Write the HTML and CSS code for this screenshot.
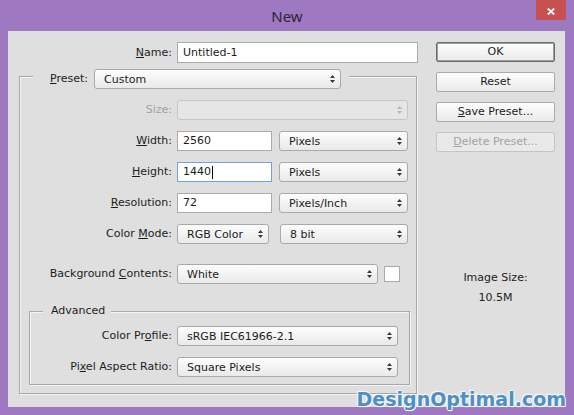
FILE: index.html
```html
<!DOCTYPE html>
<html>
<head>
<meta charset="utf-8">
<title>New</title>
<link rel="stylesheet" href="styles.css">
</head>
<body>
<div class="window">
  <div class="titlebar">
    <span></span>
    <div class="title">New</div>
    <div class="close"><svg width="8" height="7" viewBox="0 0 8 7"><path d="M0.8 0.5 L7.2 6.5 M7.2 0.5 L0.8 6.5" stroke="#fff" stroke-width="1.8" fill="none"/></svg></div>
  </div>
  <div class="content">
    <div class="left">
      <div class="frow name-row">
        <span class="lbl"><u>N</u>ame:</span>
        <div class="fields"><div class="input w241 h21">Untitled-1</div></div>
      </div>
      <div class="group outer">
        <div class="legend preset-legend">
          <span class="lbl"><u>P</u>reset:</span>
          <div class="combo w247"><span>Custom</span><svg class="arr" width="5" height="8" viewBox="0 0 5 8"><path d="M2.5 0 L5 3 L0 3 Z M0 5 L5 5 L2.5 8 Z" fill="#3a3a3a"/></svg></div>
        </div>
        <div class="rows top-rows">
          <div class="frow">
            <span class="lbl disabled">Size:</span>
            <div class="fields"><div class="combo w231 dis"><span></span><svg class="arr" width="5" height="8" viewBox="0 0 5 8"><path d="M2.5 0 L5 3 L0 3 Z M0 5 L5 5 L2.5 8 Z" fill="#b4b4b4"/></svg></div></div>
          </div>
          <div class="frow">
            <span class="lbl"><u>W</u>idth:</span>
            <div class="fields g7"><div class="input w95">2560</div><div class="combo w129"><span>Pixels</span><svg class="arr" width="5" height="8" viewBox="0 0 5 8"><path d="M2.5 0 L5 3 L0 3 Z M0 5 L5 5 L2.5 8 Z" fill="#3a3a3a"/></svg></div></div>
          </div>
          <div class="frow">
            <span class="lbl"><u>H</u>eight:</span>
            <div class="fields g7"><div class="input w95 focus">1440<span class="caret"></span></div><div class="combo w129"><span>Pixels</span><svg class="arr" width="5" height="8" viewBox="0 0 5 8"><path d="M2.5 0 L5 3 L0 3 Z M0 5 L5 5 L2.5 8 Z" fill="#3a3a3a"/></svg></div></div>
          </div>
          <div class="frow">
            <span class="lbl"><u>R</u>esolution:</span>
            <div class="fields g7"><div class="input w95">72</div><div class="combo w129"><span>Pixels/Inch</span><svg class="arr" width="5" height="8" viewBox="0 0 5 8"><path d="M2.5 0 L5 3 L0 3 Z M0 5 L5 5 L2.5 8 Z" fill="#3a3a3a"/></svg></div></div>
          </div>
          <div class="frow">
            <span class="lbl">Color <u>M</u>ode:</span>
            <div class="fields g11"><div class="combo w92"><span>RGB Color</span><svg class="arr" width="5" height="8" viewBox="0 0 5 8"><path d="M2.5 0 L5 3 L0 3 Z M0 5 L5 5 L2.5 8 Z" fill="#3a3a3a"/></svg></div><div class="combo w128"><span>8 bit</span><svg class="arr" width="5" height="8" viewBox="0 0 5 8"><path d="M2.5 0 L5 3 L0 3 Z M0 5 L5 5 L2.5 8 Z" fill="#3a3a3a"/></svg></div></div>
          </div>
        </div>
        <div class="frow bg-row">
          <span class="lbl">Background <u>C</u>ontents:</span>
          <div class="fields g6"><div class="combo w201"><span>White</span><svg class="arr" width="5" height="8" viewBox="0 0 5 8"><path d="M2.5 0 L5 3 L0 3 Z M0 5 L5 5 L2.5 8 Z" fill="#3a3a3a"/></svg></div><div class="swatch"></div></div>
        </div>
        <div class="group inner">
          <div class="legend adv-legend">Advanced</div>
          <div class="rows adv-rows">
            <div class="frow">
              <span class="lbl">Color Pr<u>o</u>file:</span>
              <div class="fields"><div class="combo w221"><span>sRGB IEC61966-2.1</span><svg class="arr" width="5" height="8" viewBox="0 0 5 8"><path d="M2.5 0 L5 3 L0 3 Z M0 5 L5 5 L2.5 8 Z" fill="#3a3a3a"/></svg></div></div>
            </div>
            <div class="frow">
              <span class="lbl">Pi<u>x</u>el Aspect Ratio:</span>
              <div class="fields"><div class="combo w221"><span>Square Pixels</span><svg class="arr" width="5" height="8" viewBox="0 0 5 8"><path d="M2.5 0 L5 3 L0 3 Z M0 5 L5 5 L2.5 8 Z" fill="#3a3a3a"/></svg></div></div>
            </div>
          </div>
        </div>
      </div>
    </div>
    <div class="right">
      <div class="btn default">OK</div>
      <div class="btn">Reset</div>
      <div class="btn"><u>S</u>ave Preset...</div>
      <div class="btn disabled-btn"><u>D</u>elete Preset...</div>
      <div class="imgsize">
        <div>Image Size:</div>
        <div>10.5M</div>
      </div>
    </div>
    <div class="watermark">DesignOptimal.com</div>
  </div>
</div>
</body>
</html>
```

FILE: styles.css
```css
* { box-sizing: border-box; }

body {
  margin: 0;
  width: 574px;
  height: 415px;
  overflow: hidden;
  background: #9e78c1;
  font-family: "DejaVu Sans", sans-serif;
  font-size: 11px;
  color: #1c1c1c;
}

u { text-decoration: underline; text-underline-offset: 1px; }

.titlebar {
  height: 31px;
  display: grid;
  grid-template-columns: 1fr auto 1fr;
}

.title {
  font-family: "Noto Sans", "Open Sans", sans-serif;
  font-size: 15px;
  color: #2e2438;
  line-height: 30px;
  padding-top: 1px;
}

.close {
  justify-self: end;
  align-self: start;
  width: 30px;
  height: 20px;
  margin-right: 8px;
  background: #c75050;
  display: flex;
  align-items: center;
  justify-content: center;
  padding-top: 3px;
}

.content {
  position: relative;
  margin-left: 8px;
  width: 557px;
  height: 376px;
  background: #dfdfdf;
  display: flex;
  gap: 18px;
  padding: 11px 10px 0 11px;
}

.left { width: 399px; }

.frow {
  display: grid;
  grid-template-columns: 152px 1fr;
  column-gap: 5px;
  align-items: center;
  height: 20px;
}

.name-row {
  grid-template-columns: 153px 1fr;
  height: 21px;
}

.lbl {
  text-align: right;
  white-space: nowrap;
  line-height: 20px;
}

.lbl.disabled { color: #a2a2a2; }

.fields {
  display: flex;
  align-items: center;
}
.g7 { gap: 7px; }
.g11 { gap: 11px; }
.g6 { gap: 6px; }

.input {
  height: 20px;
  background: #fff;
  border: 1px solid #ababab;
  padding: 0 5px;
  line-height: 18px;
  display: flex;
  align-items: center;
}
.input.h21 { height: 21px; line-height: 19px; }
.input.focus { border-color: #6ea5dd; }

.caret {
  display: inline-block;
  width: 1px;
  height: 13px;
  background: #000;
  margin-left: 1px;
}

.combo {
  height: 20px;
  border: 1px solid #a9a9a9;
  border-radius: 3px;
  background: linear-gradient(#fdfdfd, #e9e9e9);
  display: flex;
  align-items: center;
  justify-content: space-between;
  padding: 0 5px 0 9px;
  white-space: nowrap;
}
.combo.dis {
  background: #e6e6e6;
  border-color: #c6c6c6;
}

.w241 { width: 241px; }
.w247 { width: 247px; }
.w231 { width: 231px; }
.w95 { width: 95px; }
.w129 { width: 129px; }
.w92 { width: 92px; }
.w128 { width: 128px; }
.w201 { width: 201px; }
.w221 { width: 221px; }

.swatch {
  width: 16px;
  height: 16px;
  background: #fff;
  border: 1px solid #a9a9a9;
}

.group {
  border: 1px solid #a8a8a8;
  box-shadow: inset 1px 1px 0 #f4f4f4, 1px 1px 0 #f4f4f4;
}

.outer {
  width: 398px;
  margin-top: 13px;
  padding-bottom: 8px;
}

.legend {
  width: fit-content;
  background: #dfdfdf;
}

.preset-legend {
  display: flex;
  align-items: center;
  gap: 6px;
  margin-top: -8px;
  margin-left: 13px;
  padding: 0 8px 0 17px;
  height: 20px;
}

.top-rows { margin-top: 11px; }

.rows {
  display: flex;
  flex-direction: column;
  gap: 11px;
}

.bg-row { margin-top: 20px; }

.inner {
  width: 381px;
  margin: 27px 6px 0 9px;
  padding-bottom: 7px;
}

.inner .frow { grid-template-columns: 142px 1fr; }

.adv-legend {
  margin-top: -8px;
  margin-left: 13px;
  padding: 0 6px 0 8px;
  line-height: 14px;
  height: 14px;
}

.adv-rows { margin-top: 8px; }

.right {
  width: 119px;
  display: flex;
  flex-direction: column;
  gap: 10px;
}

.btn {
  height: 20px;
  border: 1px solid #ababab;
  border-radius: 2px;
  background: linear-gradient(#fdfdfd, #eaeaea);
  text-align: center;
  line-height: 18px;
}
.btn.default {
  border-color: #6c6c6c;
  box-shadow: inset 0 0 0 1px #9c9c9c;
}
.btn.disabled-btn {
  color: #a3a3a3;
  border-color: #c4c4c4;
  background: #e9e9e9;
}

.imgsize {
  margin-top: 106px;
  text-align: center;
  line-height: 20px;
  color: #222;
}

.watermark {
  position: absolute;
  right: -1px;
  bottom: -4px;
  font-family: "DejaVu Sans", sans-serif;
  font-weight: bold;
  font-size: 19px;
  line-height: 23px;
  color: #4f8fc6;
  text-shadow: 1px 0 0 #f2f6fa, -1px 0 0 #f2f6fa, 0 1px 0 #f2f6fa, 0 -1px 0 #f2f6fa, 1px 1px 1px #fff, -1px -1px 1px #fff;
}
```
